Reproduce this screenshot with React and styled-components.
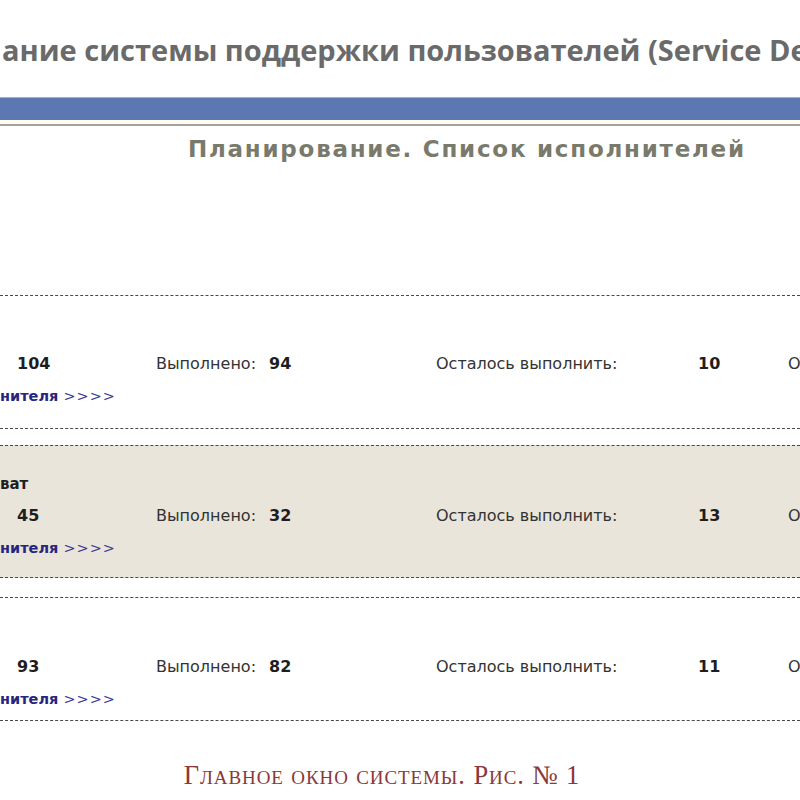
import React from "react";
import styled, { createGlobalStyle } from "styled-components";

const Global = createGlobalStyle`
  html, body { margin: 0; padding: 0; background: #ffffff; }
  body { width: 800px; height: 800px; overflow: hidden; }
`;

const Page = styled.div`
  width: 800px;
  overflow: hidden;
  display: flex;
  flex-direction: column;
`;

const Title = styled.h1`
  margin: 0;
  height: 97px;
  padding-top: 31px;
  box-sizing: border-box;
  font-family: "Open Sans", "Liberation Sans", sans-serif;
  font-weight: 700;
  font-size: 29px;
  line-height: 38px;
  color: #6a6a6a;
  white-space: nowrap;
  overflow: hidden;
  padding-left: 2px;
`;

const Bar = styled.div`
  height: 22px;
  background: #5b78b3;
  border-top: 1px solid #9fb2d8;
`;

const Rule = styled.div`
  height: 4px;
  background: #fffdf2;
  border-bottom: 2px solid #a2a29c;
`;

const Heading = styled.h2`
  margin: 0;
  height: 169px;
  padding-top: 8px;
  box-sizing: border-box;
  padding-left: 188px;
  font-family: "DejaVu Sans", Verdana, sans-serif;
  font-weight: 700;
  font-size: 23px;
  line-height: 30px;
  letter-spacing: 1.75px;
  color: #7a7a6c;
  white-space: nowrap;
`;

const List = styled.div`
  display: flex;
  flex-direction: column;
`;

const Row = styled.div`
  margin-top: ${(p) => p.$gap}px;
  padding-top: ${(p) => p.$head}px;
  padding-bottom: ${(p) => p.$tail}px;
  border-top: 1px dashed #4a4a4a;
  border-bottom: 1px dashed #4a4a4a;
  background: ${(p) => (p.$shaded ? "#e9e5da" : "#ffffff")};
  font-family: "DejaVu Sans", Verdana, sans-serif;
  color: #2a2a2a;
`;

const Line = styled.div`
  height: 32px;
  line-height: 32px;
  font-size: 16px;
  white-space: nowrap;
`;

const Name = styled(Line)`
  font-weight: 700;
  font-size: 15px;
  color: #1e1e1e;
`;

const Stats = styled(Line)`
  display: grid;
  grid-template-columns: 156px 280px 262px 90px 1fr;
`;

const Total = styled.span`
  padding-left: 17px;
  font-weight: 700;
  color: #1e1e1e;
`;

const Label = styled.span`
  color: #333333;
  font-size: 16px;
`;

const Value = styled.span`
  font-weight: 700;
  color: #1e1e1e;
  margin-left: ${(p) => p.$offset || 0}px;
`;

const Link = styled.a`
  display: block;
  height: 32px;
  line-height: 32px;
  font-size: 14.5px;
  font-weight: 700;
  color: #262680;
  text-decoration: none;
  white-space: nowrap;
`;

const Arrows = styled.span`
  font-weight: 400;
  color: #3a3a92;
  letter-spacing: 1px;
`;

const Caption = styled.p`
  margin: 0;
  padding-top: 39px;
  text-align: center;
  padding-right: 36px;
  font-family: "Liberation Serif", "DejaVu Serif", serif;
  font-variant: small-caps;
  font-size: 26.5px;
  line-height: 30px;
  color: #8a3838;
  letter-spacing: 0.9px;
`;

const rows = [
  { name: "", total: 104, done: 94, left: 10, gap: 0, head: 20, tail: 16 },
  { name: "ват", total: 45, done: 32, left: 13, gap: 16, head: 22, tail: 13, shaded: true },
  { name: "", total: 93, done: 82, left: 11, gap: 19, head: 21, tail: 5 },
];

export default function App() {
  return (
    <Page>
      <Global />
      <Title>ание системы поддержки пользователей (Service Desk)</Title>
      <Bar />
      <Rule />
      <Heading>Планирование. Список исполнителей</Heading>
      <List>
        {rows.map((r, i) => (
          <Row key={i} $gap={r.gap} $head={r.head} $tail={r.tail} $shaded={r.shaded}>
            <Name>{r.name}</Name>
            <Stats>
              <Total>{r.total}</Total>
              <span>
                <Label>Выполнено:</Label>
                <Value $offset={13}>{r.done}</Value>
              </span>
              <Label>Осталось выполнить:</Label>
              <Value>{r.left}</Value>
              <Label>О</Label>
            </Stats>
            <Link href="#">
              нителя <Arrows>&gt;&gt;&gt;&gt;</Arrows>
            </Link>
          </Row>
        ))}
      </List>
      <Caption>Главное окно системы. Рис. № 1</Caption>
    </Page>
  );
}
